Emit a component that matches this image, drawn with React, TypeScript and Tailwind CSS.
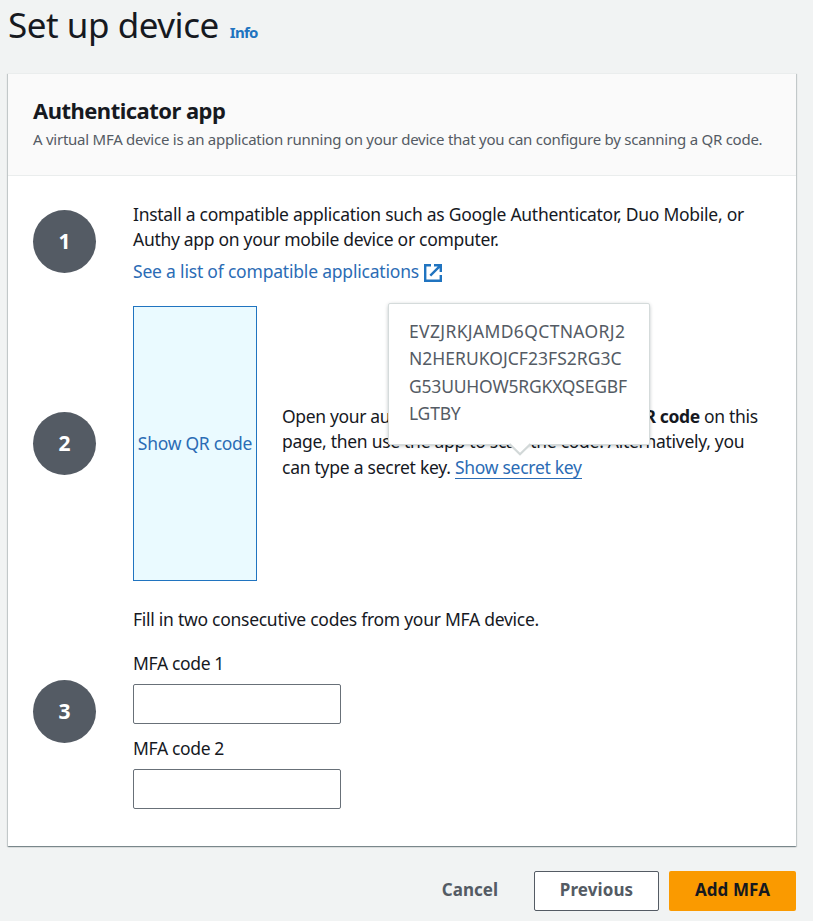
import React from "react";

function StepNumber({ value }: { value: number }) {
  return (
    <div className="flex h-[63px] w-[63px] shrink-0 items-center justify-center rounded-full bg-[#545b64] text-[21px] font-bold text-white">
      {value}
    </div>
  );
}

function ExternalIcon() {
  return (
    <svg width="18" height="18" viewBox="0 0 18 18" fill="none" stroke="#2074c0" strokeWidth="2.4" className="ml-[5px] mt-[3px]">
      <path d="M7 1.2H1.2v15.6h15.6V11" />
      <path d="M10 1.2h6.8v6.8M16.8 1.2L6.3 11.7" />
    </svg>
  );
}

function CodeField({ label }: { label: string }) {
  return (
    <label className="flex flex-col">
      <span className="h-[25px] whitespace-nowrap tracking-[-0.35px]">{label}</span>
      <input className="mt-[8px] h-10 w-[208px] rounded-[2px] border border-[#687078] bg-white px-3 outline-none" />
    </label>
  );
}

export default function App() {
  return (
    <div className="h-[921px] w-[813px] overflow-hidden bg-[#f1f3f3] font-['Noto_Sans',sans-serif] text-[17.5px] leading-[25px] text-[#16191f]">
      <header className="flex h-[73px] items-baseline pl-[8px]">
        <h1 className="whitespace-nowrap text-[35px] leading-[49px] tracking-[-0.47px]">Set up device</h1>
        <a className="ml-[11px] text-[15px] font-bold tracking-[-0.7px] text-[#2074c0]">Info</a>
      </header>

      <main className="ml-[8px] flex h-[773px] w-[788px] flex-col bg-white shadow-[0_1px_1px_0_rgba(0,28,36,0.3),1px_1px_1px_0_rgba(0,28,36,0.15),-1px_1px_1px_0_rgba(0,28,36,0.15)]">
        <div className="h-[103px] border-y border-[#eaeded] bg-[#fafafa] pl-[25px] pt-[22px]">
          <h2 className="whitespace-nowrap text-[22px] font-bold leading-[28px] tracking-[-0.53px]">Authenticator app</h2>
          <p className="mt-[5px] whitespace-nowrap text-[15px] leading-[20px] tracking-[-0.25px] text-[#545b64]">
            A virtual MFA device is an application running on your device that you can configure by scanning a QR code.
          </p>
        </div>

        <section className="mt-[26px] flex h-[79px] items-center pl-[25px]">
          <StepNumber value={1} />
          <div className="ml-[37px] flex flex-col whitespace-nowrap pt-[2px]">
            <span className="tracking-[-0.27px]">Install a compatible application such as Google Authenticator, Duo Mobile, or</span>
            <span className="tracking-[-0.3px]">Authy app on your mobile device or computer.</span>
            <a className="mt-[7px] flex h-[25px] items-center tracking-[-0.2px] text-[#2b6cb5]">
              See a list of compatible applications
              <ExternalIcon />
            </a>
          </div>
        </section>

        <section className="mt-[25px] flex h-[275px] items-center pl-[25px]">
          <StepNumber value={2} />
          <button className="ml-[37px] h-[275px] w-[124px] whitespace-nowrap border border-[#2074c0] bg-[#eafaff] pb-[1px] tracking-[-0.28px] text-[#2b6cb5]">
            Show QR code
          </button>
          <div className="ml-[25px] flex flex-col whitespace-nowrap pb-[3px] leading-[25.5px]">
            <span className="tracking-[-0.34px]">
              Open your authenticator app, choose <b>Show QR code</b> on this
            </span>
            <span className="tracking-[-0.29px]">page, then use the app to scan the code. Alternatively, you</span>
            <span className="tracking-[-0.26px]">
              can type a secret key.{" "}
              <span className="relative inline-block h-[24px] border-b border-[#2b6cb5] leading-[25px] tracking-[-0.29px] text-[#2b6cb5]">
                Show secret key
                <span className="absolute bottom-[33px] left-[-67px] h-[142px] w-[262px] rounded-[2px] border border-[#d5dbdb] bg-white pl-[20px] pt-[14px] leading-[27.5px] text-[#545b64] shadow-[0_1px_4px_-1px_rgba(0,28,36,0.4)]">
                  <span className="block tracking-[0.35px]">EVZJRKJAMD6QCTNAORJ2</span>
                  <span className="block tracking-[0.02px]">N2HERUKOJCF23FS2RG3C</span>
                  <span className="block tracking-[-0.2px]">G53UUHOW5RGKXQSEGBF</span>
                  <span className="block tracking-[-0.2px]">LGTBY</span>
                  <svg width="26" height="16" viewBox="0 0 26 16" className="absolute bottom-[-14px] left-[118px]">
                    <path d="M1 0L13 12.5L25 0Z" fill="#fff" />
                    <path d="M2.5 2L13 12.2L23.5 2" fill="none" stroke="#d2d8d8" strokeWidth="2.2" />
                  </svg>
                </span>
              </span>
            </span>
          </div>
        </section>

        <section className="mt-[20px] flex h-[221px] items-center pl-[25px]">
          <StepNumber value={3} />
          <div className="ml-[37px] flex h-full flex-col pt-[6px]">
            <p className="mb-[19px] whitespace-nowrap tracking-[-0.27px]">Fill in two consecutive codes from your MFA device.</p>
            <div className="flex flex-col gap-[12px]">
              <CodeField label="MFA code 1" />
              <CodeField label="MFA code 2" />
            </div>
          </div>
        </section>
      </main>

      <footer className="mt-[25px] flex h-10 w-[796px] items-center justify-end font-bold tracking-[0.1px] text-[#545b64]">
        <button className="mr-[36px] pb-[3px] text-[17px] tracking-[0px]">Cancel</button>
        <button className="mr-[10px] h-10 w-[125px] rounded-[2px] border border-[#545b64] bg-white pb-[3px] text-[17px]">Previous</button>
        <button className="h-10 w-[127px] rounded-[2px] bg-[#fa9a00] pb-[3px] text-[17px] text-[#16191f]">Add MFA</button>
      </footer>
    </div>
  );
}
